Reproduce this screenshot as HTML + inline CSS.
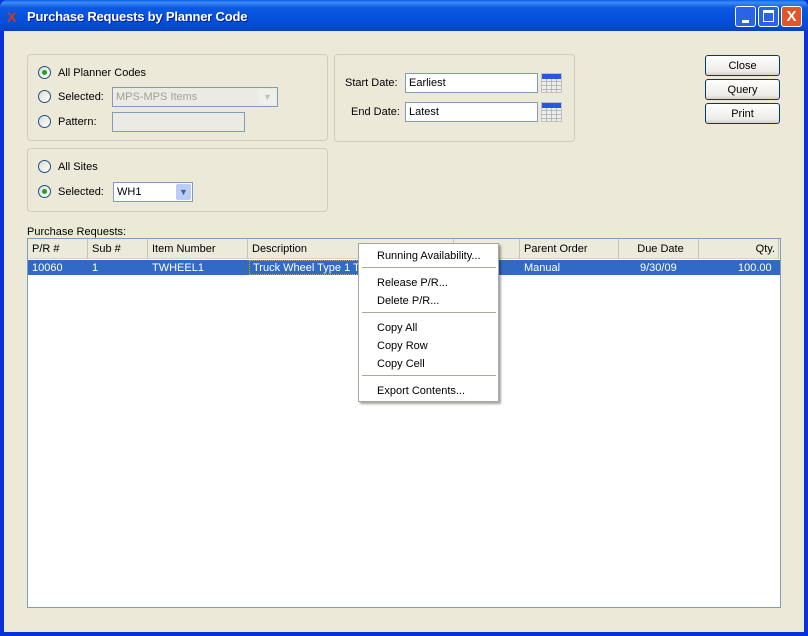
<!DOCTYPE html>
<html><head><style>
*{box-sizing:border-box;margin:0;padding:0}
body{width:808px;height:636px;overflow:hidden;font-family:"Liberation Sans",sans-serif;font-size:11px;color:#000;background:#0831d9;position:relative}
.a{position:absolute}
#title{left:0;top:0;width:808px;height:31px;background:linear-gradient(#0a5fe8 0%,#3d8cf5 8%,#0c5ae0 25%,#0450de 60%,#0349d0 90%,#0a3fc0 100%);border-radius:7px 7px 0 0}
#ttext{left:27px;top:9px;color:#fff;font-weight:bold;font-size:13px;text-shadow:1px 1px #0a1e8a;letter-spacing:-0.2px}
#client{left:4px;top:31px;width:800px;height:601px;background:#ECE9D8}
.grp{border:1px solid #d0cdbb;border-radius:4px}
.rad{width:13px;height:13px;border-radius:50%;border:1px solid #1c5180;background:linear-gradient(135deg,#dcdcd4,#fff)}
.rad.on::after{content:"";position:absolute;left:3px;top:3px;width:5px;height:5px;border-radius:50%;background:#21a121}
.inp{border:1px solid #7f9db9;background:#fff;padding:0 3px;height:20px;line-height:19px}
.dis{background:#ebebe4;color:#a1a192}
.btn{width:75px;height:21px;border:1px solid #003c74;border-radius:3px;background:linear-gradient(#fff,#ecebe6 80%,#d6d0c5);text-align:center;line-height:20px}
.cal{width:21px;height:20px;background:repeating-linear-gradient(90deg,transparent 0 4px,#b8b8b8 4px 5px),repeating-linear-gradient(#eee 0 3px,#b8b8b8 3px 4px);border:1px solid #c0c0c0}
.cal::before{content:"";position:absolute;left:0;top:0;width:19px;height:5px;background:#2a55e0}
.hd{top:0;height:20px;line-height:21px;padding-left:4px;border-right:1px solid #c7c5b2}
.mi{left:18px;position:absolute}
.sep{position:absolute;left:3px;width:134px;height:1px;background:#aca899}
</style></head><body>
<div id="title" class="a"></div>
<div class="a" style="left:7px;top:9px;font-weight:bold;font-size:14px;color:#d03a1a;font-family:'Liberation Sans';">X</div>
<div id="ttext" class="a">Purchase Requests by Planner Code</div>
<div class="a" style="left:735px;top:6px;width:21px;height:21px;border:1px solid #fff;border-radius:3px;background:#2a63e8"><div class="a" style="left:6px;top:13px;width:7px;height:3px;background:#fff"></div></div>
<div class="a" style="left:758px;top:6px;width:21px;height:21px;border:1px solid #fff;border-radius:3px;background:#2a63e8"><div class="a" style="left:4px;top:3px;width:11px;height:12px;border:1px solid #fff;border-top-width:3px"></div></div>
<div class="a" style="left:781px;top:6px;width:21px;height:21px;border:1px solid #fff;border-radius:3px;background:#e0552a;color:#fff;font-weight:bold;font-size:15px;text-align:center;line-height:19px">X</div>
<div id="client" class="a"></div>

<div class="a grp" style="left:27px;top:54px;width:301px;height:87px"></div>
<div class="a rad on" style="left:38px;top:66px"></div><div class="a" style="left:58px;top:67px">All Planner Codes</div>
<div class="a rad" style="left:38px;top:90px"></div><div class="a" style="left:58px;top:91px">Selected:</div>
<div class="a inp dis" style="left:112px;top:87px;width:166px">MPS-MPS Items</div>
<div class="a" style="left:259px;top:89px;width:17px;height:16px;background:#f0f0ea;color:#c0c0b8;text-align:center;font-size:9px;line-height:16px">&#9660;</div>
<div class="a rad" style="left:38px;top:115px"></div><div class="a" style="left:58px;top:116px">Pattern:</div>
<div class="a inp dis" style="left:112px;top:112px;width:133px"></div>

<div class="a grp" style="left:27px;top:148px;width:301px;height:64px"></div>
<div class="a rad" style="left:38px;top:160px"></div><div class="a" style="left:58px;top:161px">All Sites</div>
<div class="a rad on" style="left:38px;top:185px"></div><div class="a" style="left:58px;top:186px">Selected:</div>
<div class="a inp" style="left:113px;top:182px;width:80px">WH1</div>
<div class="a" style="left:176px;top:184px;width:15px;height:16px;background:#b9cdf8;border-radius:2px;color:#4d6185;text-align:center;font-size:9px;line-height:16px">&#9660;</div>

<div class="a grp" style="left:334px;top:54px;width:241px;height:88px"></div>
<div class="a" style="left:345px;top:77px">Start Date:</div>
<div class="a inp" style="left:405px;top:73px;width:133px">Earliest</div>
<div class="a cal" style="left:541px;top:73px"></div>
<div class="a" style="left:351px;top:106px">End Date:</div>
<div class="a inp" style="left:405px;top:102px;width:133px">Latest</div>
<div class="a cal" style="left:541px;top:102px"></div>

<div class="a btn" style="left:705px;top:55px">Close</div>
<div class="a btn" style="left:705px;top:79px">Query</div>
<div class="a btn" style="left:705px;top:103px">Print</div>

<div class="a" style="left:27px;top:226px">Purchase Requests:</div>
<div class="a" style="left:27px;top:238px;width:754px;height:370px;border:1px solid #7f9db9;background:#fff">
 <div class="a" style="left:0;top:0;width:752px;height:20px;background:#ebeadb;border-bottom:1px solid #d6d3c2"></div>
 <div class="a hd" style="left:0;width:60px">P/R #</div>
 <div class="a hd" style="left:60px;width:60px">Sub #</div>
 <div class="a hd" style="left:120px;width:100px">Item Number</div>
 <div class="a hd" style="left:220px;width:206px">Description</div>
 <div class="a hd" style="left:426px;width:66px">Status</div>
 <div class="a hd" style="left:492px;width:99px">Parent Order</div>
 <div class="a hd" style="left:591px;width:80px;text-align:center">Due Date</div>
 <div class="a hd" style="left:671px;width:80px;text-align:right;padding-right:3px">Qty.</div>
 <div class="a" style="left:0;top:21px;width:752px;height:15px;background:#316ac5;color:#fff;line-height:16px">
  <span class="a" style="left:4px">10060</span><span class="a" style="left:64px">1</span><span class="a" style="left:124px">TWHEEL1</span>
  <span class="a" style="left:221px;top:0;width:206px;height:15px;border:1px dotted #e0a040;padding-left:3px;line-height:14px;overflow:hidden;white-space:nowrap">Truck Wheel Type 1 Truck Wheel</span>
  <span class="a" style="left:496px">Manual</span><span class="a" style="left:612px">9/30/09</span><span class="a" style="left:710px">100.00</span>
 </div>
</div>

<div class="a" style="left:358px;top:243px;width:141px;height:159px;background:#fff;border:1px solid #aca899;box-shadow:2px 2px 2px rgba(0,0,0,.35)">
 <div class="mi" style="top:6px">Running Availability...</div>
 <div class="sep" style="top:23px"></div>
 <div class="mi" style="top:33px">Release P/R...</div>
 <div class="mi" style="top:51px">Delete P/R...</div>
 <div class="sep" style="top:68px"></div>
 <div class="mi" style="top:78px">Copy All</div>
 <div class="mi" style="top:96px">Copy Row</div>
 <div class="mi" style="top:114px">Copy Cell</div>
 <div class="sep" style="top:131px"></div>
 <div class="mi" style="top:141px">Export Contents...</div>
</div>
</body></html>
